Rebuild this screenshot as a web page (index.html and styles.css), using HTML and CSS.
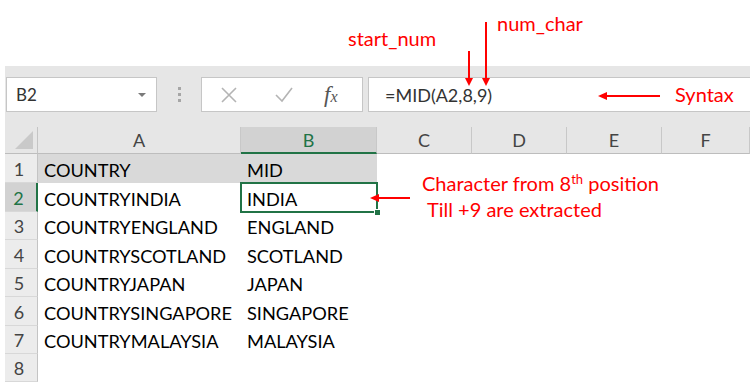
FILE: index.html
```html
<!DOCTYPE html>
<html lang="en">
<head>
    <meta charset="UTF-8">
    <meta name="viewport" content="width=device-width, initial-scale=1.0">
    <title>MID function - Excel</title>
    <link rel="stylesheet" href="styles.css">
</head>
<body>
<div class="page">
    <div class="excel">
        <div class="formula-bar">
            <div class="name-box">
                <span>B2</span>
                <svg class="caret" width="8" height="5" viewBox="0 0 8 5"><polygon points="0,0 8,0 4,4" fill="#7a7a7a"/></svg>
            </div>
            <div class="grip"><i></i><i></i><i></i></div>
            <div class="fx-box">
                <svg class="icon-x" width="18" height="16" viewBox="0 0 18 16"><path d="M2 1 L16 15 M16 1 L2 15" stroke="#b4b4b4" stroke-width="1.6" fill="none"/></svg>
                <svg class="icon-check" width="20" height="16" viewBox="0 0 20 16"><path d="M2 8 L8 14 L18 1" stroke="#b4b4b4" stroke-width="1.6" fill="none"/></svg>
                <span class="fx">f<small>x</small></span>
            </div>
            <div class="formula-input">=MID(A2,8,9)</div>
        </div>

        <div class="grid">
            <div class="corner"><svg width="20" height="20" viewBox="0 0 20 20"><polygon points="19,1 19,19 1,19" fill="#c9c9c9"/></svg></div>
            <div class="ch">A</div>
            <div class="ch active">B</div>
            <div class="ch">C</div>
            <div class="ch">D</div>
            <div class="ch">E</div>
            <div class="ch">F</div>

            <div class="rh">1</div>
            <div class="c shade">COUNTRY</div>
            <div class="c shade">MID</div>
            <div class="c"></div><div class="c"></div><div class="c"></div><div class="c"></div>

            <div class="rh active">2</div>
            <div class="c">COUNTRYINDIA</div>
            <div class="c selected">INDIA</div>
            <div class="c"></div><div class="c"></div><div class="c"></div><div class="c"></div>

            <div class="rh">3</div>
            <div class="c">COUNTRYENGLAND</div>
            <div class="c">ENGLAND</div>
            <div class="c"></div><div class="c"></div><div class="c"></div><div class="c"></div>

            <div class="rh">4</div>
            <div class="c">COUNTRYSCOTLAND</div>
            <div class="c">SCOTLAND</div>
            <div class="c"></div><div class="c"></div><div class="c"></div><div class="c"></div>

            <div class="rh">5</div>
            <div class="c">COUNTRYJAPAN</div>
            <div class="c">JAPAN</div>
            <div class="c"></div><div class="c"></div><div class="c"></div><div class="c"></div>

            <div class="rh">6</div>
            <div class="c">COUNTRYSINGAPORE</div>
            <div class="c">SINGAPORE</div>
            <div class="c"></div><div class="c"></div><div class="c"></div><div class="c"></div>

            <div class="rh">7</div>
            <div class="c">COUNTRYMALAYSIA</div>
            <div class="c">MALAYSIA</div>
            <div class="c"></div><div class="c"></div><div class="c"></div><div class="c"></div>

            <div class="rh">8</div>
            <div class="c"></div><div class="c"></div>
            <div class="c"></div><div class="c"></div><div class="c"></div><div class="c"></div>
        </div>
    </div>

    <!-- red annotations drawn over the screenshot -->
    <div class="note note-start">start_num</div>
    <div class="note note-char">num_char</div>
    <div class="note note-syntax">Syntax</div>
    <div class="note note-result">Character from 8<sup>th</sup> position</div>
    <div class="note note-till">Till +9 are extracted</div>
    <svg class="arrows" width="750" height="382" viewBox="0 0 750 382">
        <g stroke="#ff0000" stroke-width="2" fill="none">
            <line x1="469" y1="51" x2="469" y2="80"/>
            <line x1="486" y1="22" x2="486" y2="80"/>
            <line x1="605" y1="96" x2="660" y2="96"/>
            <line x1="377" y1="198" x2="410" y2="198"/>
        </g>
        <g fill="#ff0000">
            <polygon points="465,78 473,78 469,86"/>
            <polygon points="482,78 490,78 486,86"/>
            <polygon points="598,96 607,92 607,100"/>
            <polygon points="370,198 379,194 379,202"/>
        </g>
    </svg>
</div>
</body>
</html>
```

FILE: styles.css
```css
body {
    margin: 0;
    background: white;
    font-family: Lato, "Open Sans", sans-serif;
    color: #000;
}
.page {
    position: relative;
    width: 750px;
    height: 382px;
    overflow: hidden;
}
.excel {
    margin: 66px 0 0 5px;
    background: #e6e6e6;
}

/* formula bar */
.formula-bar {
    display: flex;
    align-items: flex-start;
    height: 61px;
    padding-top: 11px;
    box-sizing: border-box;
}
.name-box {
    display: flex;
    align-items: center;
    justify-content: space-between;
    width: 151px;
    height: 35px;
    margin-left: 1px;
    padding: 0 10px 0 9px;
    box-sizing: border-box;
    background: white;
    border: 1px solid #c6c6c6;
    font-size: 17px;
    color: #333;
}
.caret {
    margin-top: 1px;
}
.grip {
    display: flex;
    flex-direction: column;
    gap: 3px;
    width: 44px;
    align-items: center;
    padding-top: 10px;
}
.grip i {
    display: block;
    width: 3px;
    height: 3px;
    background: #a6a6a6;
}
.fx-box {
    display: flex;
    align-items: center;
    width: 162px;
    height: 35px;
    box-sizing: border-box;
    background: white;
    border: 1px solid #c6c6c6;
    padding-left: 18px;
}
.icon-check {
    margin-left: 36px;
}
.fx {
    margin-left: 30px;
    font-family: "Liberation Serif", serif;
    font-style: italic;
    font-size: 23px;
    color: #555;
}
.fx small {
    font-size: 16px;
}
.formula-input {
    flex: 1;
    height: 35px;
    margin-left: 5px;
    padding: 6px 0 0 16px;
    box-sizing: border-box;
    background: white;
    border: 1px solid #c6c6c6;
    border-right: none;
    font-size: 18px;
    color: #333;
}

/* sheet grid */
.grid {
    display: grid;
    grid-template-columns: 33px 203px 136px 95px 95px 95px 1fr;
    grid-template-rows: 27px 29px 29px 28px 29px 28px 29px 28px 28px;
    background: white;
}
.corner {
    display: flex;
    align-items: flex-end;
    justify-content: flex-end;
    padding: 0 3px 3px 0;
    background: #e6e6e6;
    border-right: 1px solid #c4c4c4;
    border-bottom: 1px solid #bdbdbd;
}
.ch {
    display: flex;
    align-items: center;
    justify-content: center;
    font-size: 18px;
    color: #444;
    background: #e6e6e6;
    border-right: 1px solid #c8c8c8;
    border-bottom: 1px solid #bdbdbd;
    box-sizing: border-box;
}
.ch.active {
    background: #d2d2d2;
    color: #217346;
    border-bottom: 2px solid #217346;
}
.rh {
    display: flex;
    align-items: center;
    justify-content: center;
    padding: 1px 4px 0 0;
    font-size: 18px;
    color: #444;
    background: #ececec;
    border-right: 1px solid #c4c4c4;
    border-bottom: 1px solid #d8d8d8;
    box-sizing: border-box;
}
.rh.active {
    background: #d2d2d2;
    color: #217346;
    border-right: 2px solid #217346;
}
.c {
    display: flex;
    align-items: center;
    padding: 2px 0 0 6px;
    font-size: 18.2px;
    white-space: nowrap;
}
.c.shade {
    background: #d9d9d9;
}
.c.selected {
    position: relative;
}
.c.selected::before {
    content: "";
    position: absolute;
    left: -1px;
    top: -1px;
    right: -1px;
    bottom: -1px;
    border: 2px solid #217346;
}
.c.selected::after {
    content: "";
    position: absolute;
    right: -4px;
    bottom: -4px;
    width: 5px;
    height: 5px;
    background: #217346;
    border: 1px solid white;
}

/* annotations */
.note {
    position: absolute;
    font-size: 20px;
    color: #ff0000;
    white-space: nowrap;
}
.note sup {
    font-size: 13px;
    vertical-align: 7px;
    line-height: 0;
}
.note-start { left: 348px; top: 26px; }
.note-char { left: 497px; top: 11px; }
.note-syntax { left: 675px; top: 82px; }
.note-result { left: 422px; top: 171px; }
.note-till { left: 427px; top: 197px; }
.arrows {
    position: absolute;
    left: 0;
    top: 0;
    pointer-events: none;
}
```
